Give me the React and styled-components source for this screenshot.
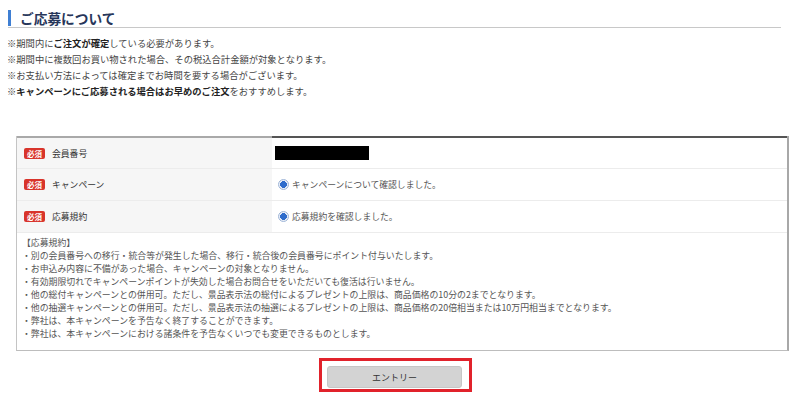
import React from "react";
import styled, { createGlobalStyle } from "styled-components";

const GlobalStyle = createGlobalStyle`
  body {
    margin: 0;
    background: #fff;
    font-family: "Noto Sans CJK JP", "Noto Sans", sans-serif;
    color: #333;
  }
`;

const notes = [
  [["※期間内に", false], ["ご注文が確定", true], ["している必要があります。", false]],
  [["※期間中に複数回お買い物された場合、その税込合計金額が対象となります。", false]],
  [["※お支払い方法によっては確定までお時間を要する場合がございます。", false]],
  [["※", false], ["キャンペーンにご応募される場合はお早めのご注文", true], ["をおすすめします。", false]],
];

const terms = [
  "【応募規約】",
  "・別の会員番号への移行・統合等が発生した場合、移行・統合後の会員番号にポイント付与いたします。",
  "・お申込み内容に不備があった場合、キャンペーンの対象となりません。",
  "・有効期限切れでキャンペーンポイントが失効した場合お問合せをいただいても復活は行いません。",
  "・他の総付キャンペーンとの併用可。ただし、景品表示法の総付によるプレゼントの上限は、商品価格の10分の2までとなります。",
  "・他の抽選キャンペーンとの併用可。ただし、景品表示法の抽選によるプレゼントの上限は、商品価格の20倍相当または10万円相当までとなります。",
  "・弊社は、本キャンペーンを予告なく終了することができます。",
  "・弊社は、本キャンペーンにおける諸条件を予告なくいつでも変更できるものとします。",
];

const App = () => {
  return (
    <Page>
      <GlobalStyle />
      <Heading>
        <Title>ご応募について</Title>
      </Heading>
      <Notes>
        {notes.map((line, i) => (
          <Note key={i}>
            {line.map(([txt, bold], j) =>
              bold ? <Strong key={j}>{txt}</Strong> : <span key={j}>{txt}</span>
            )}
          </Note>
        ))}
      </Notes>

      <Form>
        <Row>
          <LabelCell first>
            <Badge>必須</Badge>
            <Label>会員番号</Label>
          </LabelCell>
          <ValueCell first>
            <Masked />
          </ValueCell>
        </Row>
        <Row>
          <LabelCell>
            <Badge>必須</Badge>
            <Label>キャンペーン</Label>
          </LabelCell>
          <ValueCell>
            <Radio />
            <ValueText>キャンペーンについて確認しました。</ValueText>
          </ValueCell>
        </Row>
        <Row>
          <LabelCell>
            <Badge>必須</Badge>
            <Label>応募規約</Label>
          </LabelCell>
          <ValueCell>
            <Radio />
            <ValueText>応募規約を確認しました。</ValueText>
          </ValueCell>
        </Row>
        <Terms>
          {terms.map((t, i) => (
            <TermLine key={i}>{t}</TermLine>
          ))}
        </Terms>
      </Form>

      <ButtonRow>
        <Highlight>
          <EntryButton type="button">エントリー</EntryButton>
        </Highlight>
      </ButtonRow>
    </Page>
  );
};

export default App;

const Page = styled.div`
  width: 799px;
  height: 395px;
  overflow: hidden;
`;

const Heading = styled.h2`
  margin: 0 18px 0 8px;
  padding: 10px 0 1px;
  border-bottom: 1px solid #c8c8c8;
`;

const Title = styled.span`
  display: block;
  border-left: 3px solid #3f7fd3;
  padding-left: 9px;
  font-size: 13.7px;
  line-height: 16px;
  font-weight: 700;
  color: #27365a;
`;

const Notes = styled.div`
  margin-top: 7px;
  padding-left: 7px;
`;

const Note = styled.div`
  font-size: 9.3px;
  line-height: 16px;
  color: #444;
  white-space: nowrap;
`;

const Strong = styled.span`
  font-weight: 700;
  color: #222;
`;

const Form = styled.div`
  margin: 37px 10px 0 16px;
  border-left: 1px solid #c4c4c4;
  border-right: 2px solid #a8a8a8;
  border-bottom: 1px solid #bdbdbd;
`;

const Row = styled.div`
  display: grid;
  grid-template-columns: 255px 1fr;
  border-bottom: 1px solid #ececec;
`;

const LabelCell = styled.div`
  display: flex;
  align-items: center;
  gap: 7px;
  height: ${(p) => (p.first ? "30px" : "31px")};
  padding-left: 7px;
  background: #f6f6f6;
  border-top: ${(p) => (p.first ? "2px solid #a9a9a9" : "none")};
`;

const ValueCell = styled.div`
  display: flex;
  align-items: center;
  height: ${(p) => (p.first ? "30px" : "31px")};
  padding-left: 3px;
  background: #fff;
  border-top: ${(p) => (p.first ? "2px solid #555" : "none")};
`;

const Badge = styled.span`
  display: inline-block;
  background: #d8342b;
  color: #fff;
  font-size: 7.5px;
  font-weight: 700;
  line-height: 11px;
  padding: 0 3px;
  border-radius: 2px;
`;

const Label = styled.span`
  font-size: 8.8px;
  color: #333;
`;

const Masked = styled.div`
  width: 94px;
  height: 14px;
  background: #000;
`;

const Radio = styled.span`
  box-sizing: border-box;
  width: 11px;
  height: 11px;
  margin-left: 3px;
  border-radius: 50%;
  border: 1px solid #9fb6d8;
  background: radial-gradient(circle, #2f6ccb 0 3.2px, #e9eef7 3.6px);
`;

const ValueText = styled.span`
  margin-left: 3px;
  font-size: 8.8px;
  color: #555;
`;

const Terms = styled.div`
  padding: 3px 0 10px 5px;
  background: #fff;
`;

const TermLine = styled.div`
  font-size: 8.9px;
  line-height: 13px;
  color: #555;
  white-space: nowrap;
`;

const ButtonRow = styled.div`
  display: flex;
  justify-content: center;
  padding-right: 8px;
  margin-top: 7px;
`;

const Highlight = styled.div`
  display: flex;
  border: 3px solid #e1222b;
  padding: 5px 7px 1px 5px;
`;

const EntryButton = styled.button`
  width: 135px;
  height: 22px;
  background: #d3d3d3;
  border: 1px solid #c6c6c6;
  border-radius: 3px;
  font-family: "Noto Sans CJK JP", sans-serif;
  font-size: 9px;
  color: #333;
  cursor: pointer;
`;
